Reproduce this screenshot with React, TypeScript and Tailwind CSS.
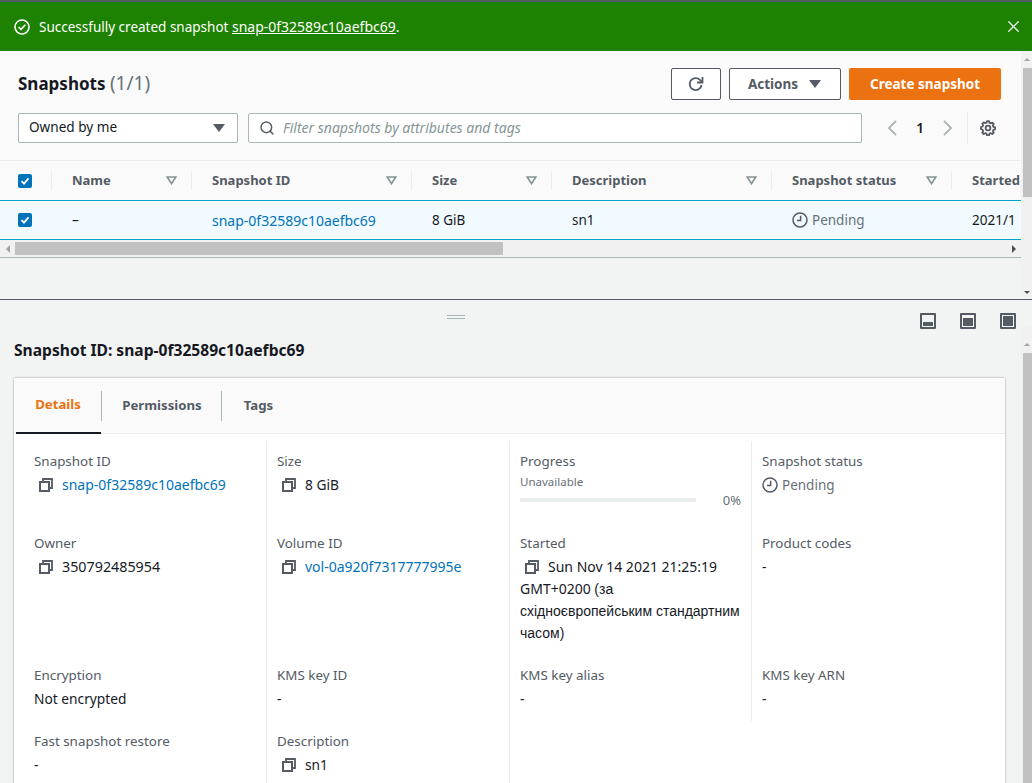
import type {ReactNode} from "react";
import {Search, X} from "lucide-react";

const font = "font-['Noto_Sans',sans-serif]";

const Caret = ({className = ""}: {className?: string}) => (
    <svg width="14" height="10" viewBox="0 0 14 10" className={className}>
        <path d="M1 1h12L7 9z" fill="currentColor" />
    </svg>
);

const FilterCaret = () => (
    <svg width="11" height="9" viewBox="0 0 11 9" className="text-[#879596]">
        <path d="M1.2 1h8.6L5.5 7.6z" fill="none" stroke="currentColor" strokeWidth="1.7" />
    </svg>
);

const Check = () => (
    <div className="flex h-[14px] w-[14px] items-center justify-center rounded-[2px] bg-[#0073bb]">
        <svg width="10" height="10" viewBox="0 0 10 10">
            <path d="M1.5 5.2 4 7.7 8.5 2.3" fill="none" stroke="#fff" strokeWidth="1.8" />
        </svg>
    </div>
);

const Clock = () => (
    <svg width="16" height="16" viewBox="0 0 16 16" className="shrink-0">
        <circle cx="8" cy="8" r="7" fill="none" stroke="#545b64" strokeWidth="1.5" />
        <path d="M8.6 3.8v4.8H5" fill="none" stroke="#545b64" strokeWidth="1.5" />
    </svg>
);

const Copy = () => (
    <svg width="14" height="14" viewBox="0 0 14 14" className="shrink-0">
        <path d="M4 3.5V1h9v9h-2.5" fill="none" stroke="#545b64" strokeWidth="1.8" />
        <rect x="1" y="4" width="9" height="9" fill="none" stroke="#545b64" strokeWidth="2" />
    </svg>
);

const PaneIcon = ({fill}: {fill: string}) => (
    <div className="flex h-4 w-4 flex-col justify-end rounded-[1px] border-[2px] border-[#545b64] bg-[#f2f3f3] p-[1px]">
        <div className={`w-full bg-[#545b64] ${fill}`} />
    </div>
);

const Gear = () => (
    <svg width="16" height="16" viewBox="0 0 16 16">
        <circle cx="8" cy="8" r="2.4" fill="none" stroke="#545b64" strokeWidth="1.8" />
        <path
            d="M8 1.2l1 .1.5 1.7 1.2.5 1.6-.8 1.4 1.4-.8 1.6.5 1.2 1.7.5v2l-1.7.5-.5 1.2.8 1.6-1.4 1.4-1.6-.8-1.2.5-.5 1.7h-2l-.5-1.7-1.2-.5-1.6.8-1.4-1.4.8-1.6-.5-1.2L.9 9.1v-2l1.7-.5.5-1.2-.8-1.6 1.4-1.4 1.6.8 1.2-.5L7 1.3z"
            fill="none"
            stroke="#545b64"
            strokeWidth="1.8"
            strokeLinejoin="round"
            transform="translate(0 -.1)"
        />
    </svg>
);

const Chevron = ({d}: {d: string}) => (
    <svg width="12" height="16" viewBox="0 0 12 16" className="shrink-0">
        <path d={d} fill="none" stroke="#aab7b8" strokeWidth="1.9" />
    </svg>
);

const HeadCell = ({label, width, sort = true}: {label: string; width: string; sort?: boolean}) => (
    <div className={`flex h-[19px] shrink-0 items-center justify-between border-l border-[#eaeded] pl-5 pr-[14px] ${width}`}>
        <span className="whitespace-nowrap text-[13px] font-bold text-[#545b64]">{label}</span>
        {sort && <FilterCaret />}
    </div>
);

const Field = ({label, children}: {label: string; children: ReactNode}) => (
    <div className="flex flex-col">
        <div className="text-[13.4px] leading-[22px] text-[#545b64]">{label}</div>
        <div className="mt-[2px] text-[13.75px] leading-[22px] text-[#16191f]">{children}</div>
    </div>
);

const Copyable = ({children}: {children: ReactNode}) => (
    <div className="flex items-center gap-[9px] pl-[5px]">
        <Copy />
        {children}
    </div>
);

const Link = ({children}: {children: ReactNode}) => <span className="text-[14px] text-[#0073bb]">{children}</span>;

export default function App() {
    return (
        <div className={`${font} flex h-[783px] w-[1032px] flex-col overflow-hidden bg-[#f2f3f3] text-[#16191f]`}>
            {/* Flash banner */}
            <div className="h-[2px] bg-[#545b64]" />
            <div className="flex h-[49px] items-center justify-between bg-[#1d8102] pl-[14px] pr-[9px] text-white">
                <div className="flex items-center gap-[9px] text-[13.5px]">
                    <svg width="16" height="16" viewBox="0 0 16 16">
                        <circle cx="8" cy="8" r="7" fill="none" stroke="#fff" strokeWidth="1.6" />
                        <path d="M4.6 8 7 10.4 11.4 5.8" fill="none" stroke="#fff" strokeWidth="1.6" />
                    </svg>
                    <span>
                        Successfully created snapshot <span className="text-[14px] underline">snap-0f32589c10aefbc69</span>.
                    </span>
                </div>
                <X size={19} strokeWidth={1.7} className="text-[#eaeded]" />
            </div>

            {/* Snapshots list */}
            <div className="flex h-[248px] shrink-0">
                <div className="flex w-[1021px] flex-col">
                    <div className="flex h-[109px] flex-col bg-[#fafafa] pl-[18px] pt-[17px]">
                        <div className="flex h-8 items-center justify-between pr-5">
                            <h1 className="mb-[2px] text-[17px] font-bold leading-[22px]">
                                Snapshots <span className="text-[19px] font-normal text-[#687078]">(1/1)</span>
                            </h1>
                            <div className="flex gap-2">
                                <div className="flex h-8 w-[50px] items-center justify-center rounded-[2px] border border-[#545b64] bg-white">
                                    <svg width="18" height="18" viewBox="0 0 18 18">
                                        <path d="M14.6 10a6 6 0 1 1-1.7-5.2L15 7" fill="none" stroke="#545b64" strokeWidth="1.8" />
                                        <path d="M15.5 2v5.5H10" fill="none" stroke="#545b64" strokeWidth="1.8" />
                                    </svg>
                                </div>
                                <div className="flex h-8 w-[112px] items-center justify-center gap-[10px] rounded-[2px] border border-[#545b64] bg-white text-[13.5px] font-bold text-[#545b64]">
                                    Actions
                                    <Caret />
                                </div>
                                <div className="flex h-8 w-[152px] items-center justify-center rounded-[2px] bg-[#ec7211] text-[13.5px] font-bold text-white">
                                    Create snapshot
                                </div>
                            </div>
                        </div>
                        <div className="mt-3 flex items-center">
                            <div className="flex h-[30px] w-[220px] items-center justify-between rounded-[2px] border border-[#aab7b8] bg-white pb-[1px] pl-[10px] pr-[11px] text-[13.6px]">
                                Owned by me
                                <Caret className="text-[#545b64]" />
                            </div>
                            <div className="ml-[10px] flex h-[30px] w-[614px] items-center gap-2 rounded-[2px] border border-[#aab7b8] bg-white pb-[1px] pl-[10px] text-[14px] italic text-[#879596]">
                                <Search size={16} strokeWidth={2.2} className="text-[#545b64]" />
                                Filter snapshots by attributes and tags
                            </div>
                            <div className="ml-[24px] flex items-center">
                                <Chevron d="M10 1 3 8l7 7" />
                                <span className="ml-[18px] w-2 text-center text-[13.5px] font-semibold">1</span>
                                <div className="ml-[18px]">
                                    <Chevron d="M2 1l7 7-7 7" />
                                </div>
                                <div className="ml-[13px] h-8 border-l border-[#eaeded]" />
                                <div className="ml-[12px]">
                                    <Gear />
                                </div>
                            </div>
                        </div>
                    </div>

                    <div className="h-[1px] bg-[#eaeded]" />

                    <div className="flex h-[39px] items-center overflow-hidden bg-[#fafafa]">
                        <div className="flex w-[51px] shrink-0 justify-center pr-[1px]">
                            <Check />
                        </div>
                        <HeadCell label="Name" width="w-[140px]" />
                        <HeadCell label="Snapshot ID" width="w-[220px]" />
                        <HeadCell label="Size" width="w-[140px]" />
                        <HeadCell label="Description" width="w-[220px]" />
                        <HeadCell label="Snapshot status" width="w-[180px]" />
                        <HeadCell label="Started" width="w-[100px]" sort={false} />
                    </div>

                    <div className="flex h-[40px] items-center overflow-hidden border-y border-[#00a1c9] bg-[#f1faff] text-[13.5px]">
                        <div className="flex w-[51px] shrink-0 justify-center pr-[1px]">
                            <Check />
                        </div>
                        <div className="w-[140px] shrink-0 pl-[21px]">–</div>
                        <div className="w-[220px] shrink-0 pl-[21px] text-[14px] text-[#0073bb]">snap-0f32589c10aefbc69</div>
                        <div className="w-[140px] shrink-0 pl-[21px]">8 GiB</div>
                        <div className="w-[220px] shrink-0 pl-[21px]">sn1</div>
                        <div className="flex w-[180px] shrink-0 items-center gap-1 pl-[21px] text-[#687078]">
                            <Clock />
                            Pending
                        </div>
                        <div className="shrink-0 whitespace-nowrap pl-[21px]">2021/1</div>
                    </div>

                    {/* Horizontal scrollbar */}
                    <div className="flex h-[18px] items-center border-b-[1px] border-[#aab7b8] bg-[#f1f1f1]">
                        <div className="flex w-[15px] justify-center">
                            <div className="h-0 w-0 border-y-[4px] border-r-[4px] border-y-transparent border-r-[#a3a3a3]" />
                        </div>
                        <div className="h-[13px] w-[488px] bg-[#c1c1c1]" />
                        <div className="flex flex-1 justify-end pr-[5px]">
                            <div className="h-0 w-0 border-y-[4px] border-l-[4px] border-y-transparent border-l-[#505050]" />
                        </div>
                    </div>
                    <div className="flex-1" />
                </div>
                <div className="flex w-[11px] flex-col bg-[#f1f1f1]">
                    <div className="flex h-[17px] items-center justify-center">
                        <div className="h-0 w-0 border-x-[3px] border-b-[3px] border-x-transparent border-b-[#a3a3a3]" />
                    </div>
                    <div className="ml-[2px] h-[129px] bg-[#c1c1c1]" />
                    <div className="flex flex-1 items-end justify-center pb-[5px]">
                        <div className="h-0 w-0 border-x-[3px] border-t-[3px] border-x-transparent border-t-[#505050]" />
                    </div>
                </div>
            </div>

            <div className="h-[1px] shrink-0 bg-[#545b64]" />

            {/* Split panel */}
            <div className="flex h-[26px] shrink-0 items-start pr-[16px] pt-[15px]">
                <div className="flex flex-1 justify-center">
                    <div className="ml-[-8px] h-[4px] w-[18px] border-y border-[#aab7b8]" />
                </div>
                <div className="mt-[-2px] flex gap-[24px]">
                    <PaneIcon fill="h-[4px]" />
                    <PaneIcon fill="h-[8px]" />
                    <PaneIcon fill="h-full" />
                </div>
            </div>

            <div className="flex min-h-0 flex-1">
                <div className="w-[1021px] pl-[14px] pr-[16px]">
                    <h2 className="mt-[13px] text-[15.6px] font-bold leading-[22px]">Snapshot ID: snap-0f32589c10aefbc69</h2>
                    <div className="mt-[17px] h-[500px] rounded-t-[1px] bg-white shadow-[0_0_2px_rgba(0,28,36,0.5)]">
                        <div className="flex h-[56px] border-b border-[#eaeded] bg-[#fafafa] pl-[2px] text-[13.2px] font-bold text-[#545b64]">
                            <div className="flex h-[56px] w-[85px] items-center justify-center border-b-[2px] border-[#16191f] pr-[1px] text-[#ec7211]">
                                Details
                            </div>
                            <div className="flex items-center">
                                <div className="h-[30px] border-l border-[#aab7b8]" />
                            </div>
                            <div className="flex w-[119px] items-center justify-center pl-[1px]">Permissions</div>
                            <div className="flex items-center">
                                <div className="h-[30px] border-l border-[#aab7b8]" />
                            </div>
                            <div className="flex w-[73px] items-center justify-center">Tags</div>
                        </div>

                        <div className="grid grid-cols-[247px_243px_241px_1fr] items-stretch pl-[6px] pt-[7px]">
                            <div className="flex flex-col border-r border-[#eaeded] pl-[14px]">
                                <div className="h-[82px] pt-[9px]">
                                    <Field label="Snapshot ID">
                                        <Copyable><Link>snap-0f32589c10aefbc69</Link></Copyable>
                                    </Field>
                                </div>
                                <div className="h-[132px] pt-[9px]">
                                    <Field label="Owner">
                                        <Copyable><span className="text-[14.3px]">350792485954</span></Copyable>
                                    </Field>
                                </div>
                                <div className="h-[66px] pt-[9px]">
                                    <Field label="Encryption">Not encrypted</Field>
                                </div>
                                <div className="h-[66px] pt-[9px]">
                                    <Field label="Fast snapshot restore">-</Field>
                                </div>
                            </div>
                            <div className="flex flex-col border-r border-[#eaeded] pl-[10px]">
                                <div className="h-[82px] pt-[9px]">
                                    <Field label="Size">
                                        <Copyable>8 GiB</Copyable>
                                    </Field>
                                </div>
                                <div className="h-[132px] pt-[9px]">
                                    <Field label="Volume ID">
                                        <Copyable><Link>vol-0a920f7317777995e</Link></Copyable>
                                    </Field>
                                </div>
                                <div className="h-[66px] pt-[9px]">
                                    <Field label="KMS key ID">-</Field>
                                </div>
                                <div className="h-[66px] pt-[9px]">
                                    <Field label="Description">
                                        <Copyable>sn1</Copyable>
                                    </Field>
                                </div>
                            </div>
                            <div className="flex flex-col pl-[10px] pr-[10px]">
                                <div className="h-[82px] pt-[9px]">
                                    <div className="text-[13.4px] leading-[22px] text-[#545b64]">Progress</div>
                                    <div className="text-[11.5px] leading-[20px] text-[#687078]">Unavailable</div>
                                    <div className="flex items-center justify-between text-[13px] leading-[16px] text-[#687078]">
                                        <div className="h-1 w-[176px] bg-[#eaeded]" />
                                        0%
                                    </div>
                                </div>
                                <div className="h-[132px] pt-[9px]">
                                    <div className="text-[13.4px] leading-[22px] text-[#545b64]">Started</div>
                                    <div className="mt-[2px] text-[14px] leading-[22px]">
                                        <span className="mr-[9px] ml-[5px] inline-block translate-y-[2px]"><Copy /></span>
                                        Sun Nov 14 2021 21:25:19 GMT+0200{" "}
                                        <span className="font-['Liberation_Sans',sans-serif]">
                                            (за <span className="whitespace-nowrap">східноєвропейським стандартним</span> часом)
                                        </span>
                                    </div>
                                </div>
                                <div className="h-[66px] pt-[9px]">
                                    <Field label="KMS key alias">-</Field>
                                </div>
                            </div>
                            <div className="flex flex-col self-start border-l border-[#eaeded] pl-[10px]">
                                <div className="h-[82px] pt-[9px]">
                                    <Field label="Snapshot status">
                                        <div className="flex items-center gap-1 text-[13.5px] text-[#687078]">
                                            <Clock />
                                            Pending
                                        </div>
                                    </Field>
                                </div>
                                <div className="h-[132px] pt-[9px]">
                                    <Field label="Product codes">-</Field>
                                </div>
                                <div className="h-[66px] pt-[9px]">
                                    <Field label="KMS key ARN">-</Field>
                                </div>
                            </div>
                        </div>
                    </div>
                </div>
                <div className="w-[11px] bg-[#f1f1f1] pt-[10px]">
                    <div className="flex h-[17px] items-center justify-center">
                        <div className="h-0 w-0 border-x-[3px] border-b-[3px] border-x-transparent border-b-[#a3a3a3]" />
                    </div>
                    <div className="ml-[2px] h-[440px] bg-[#c1c1c1]" />
                </div>
            </div>
        </div>
    );
}
